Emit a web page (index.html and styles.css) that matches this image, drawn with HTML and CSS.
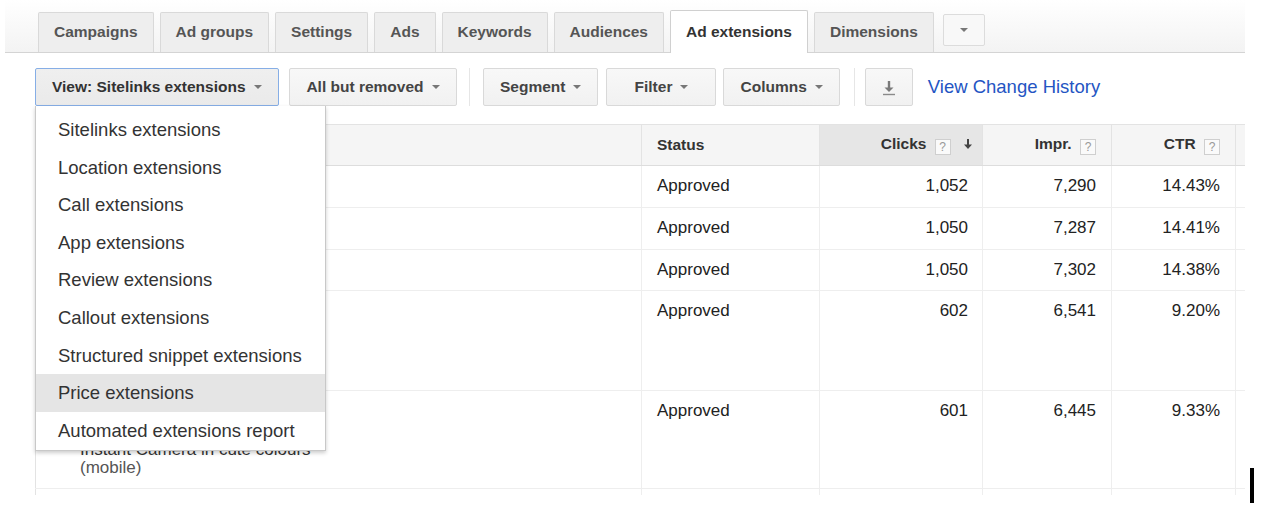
FILE: index.html
```html
<!DOCTYPE html>
<html lang="en">
<head>
    <meta charset="UTF-8">
    <title>Ad extensions</title>
    <link rel="stylesheet" href="styles.css">
</head>
<body>
<div class="page">

    <div class="tabbar">
        <a class="tab">Campaigns</a>
        <a class="tab">Ad groups</a>
        <a class="tab">Settings</a>
        <a class="tab">Ads</a>
        <a class="tab">Keywords</a>
        <a class="tab">Audiences</a>
        <a class="tab active">Ad extensions</a>
        <a class="tab">Dimensions</a>
        <span class="tab-more"><span class="caret"></span></span>
    </div>

    <div class="toolbar">
        <div class="view-menu">
            <button class="btn btn-open">View: Sitelinks extensions <span class="caret"></span></button>
            <ul class="menu">
                <li>Sitelinks extensions</li>
                <li>Location extensions</li>
                <li>Call extensions</li>
                <li>App extensions</li>
                <li>Review extensions</li>
                <li>Callout extensions</li>
                <li>Structured snippet extensions</li>
                <li class="hover">Price extensions</li>
                <li>Automated extensions report</li>
            </ul>
        </div>
        <button class="btn btn-status">All but removed <span class="caret"></span></button>
        <span class="sep"></span>
        <button class="btn">Segment <span class="caret"></span></button>
        <button class="btn btn-filter">Filter <span class="caret"></span></button>
        <button class="btn">Columns <span class="caret"></span></button>
        <span class="sep sep-2"></span>
        <button class="btn btn-icon" title="Download">
            <svg width="14" height="17" viewBox="0 0 14 17">
                <path d="M7 2v9" stroke="#7a7a7a" stroke-width="2.4"/>
                <path d="M2.5 8.5L7 13l4.5-4.5z" fill="#7a7a7a"/>
                <path d="M1 15.5h12" stroke="#8a8a8a" stroke-width="1.4"/>
            </svg>
        </button>
        <a class="history" href="#">View Change History</a>
    </div>

    <div class="grid-wrap">
        <table class="grid">
            <colgroup>
                <col style="width: 606px">
                <col style="width: 178px">
                <col style="width: 163px">
                <col style="width: 129px">
                <col style="width: 124px">
                <col style="width: 10px">
            </colgroup>
            <thead>
                <tr>
                    <th></th>
                    <th>Status</th>
                    <th class="num sorted">Clicks <span class="help">?</span>
                        <svg class="sort" width="10" height="11" viewBox="0 0 10 11">
                            <path d="M5 0v7" stroke="#444" stroke-width="2"/>
                            <path d="M1 5.5L5 10l4-4.5z" fill="#444"/>
                        </svg>
                    </th>
                    <th class="num">Impr. <span class="help">?</span></th>
                    <th class="num">CTR <span class="help">?</span></th>
                    <th></th>
                </tr>
            </thead>
            <tbody>
                <tr class="r-short">
                    <td></td>
                    <td>Approved</td>
                    <td class="num n-sorted">1,052</td>
                    <td class="num">7,290</td>
                    <td class="num">14.43%</td>
                    <td></td>
                </tr>
                <tr class="r-short">
                    <td></td>
                    <td>Approved</td>
                    <td class="num n-sorted">1,050</td>
                    <td class="num">7,287</td>
                    <td class="num">14.41%</td>
                    <td></td>
                </tr>
                <tr class="r-41">
                    <td></td>
                    <td>Approved</td>
                    <td class="num n-sorted">1,050</td>
                    <td class="num">7,302</td>
                    <td class="num">14.38%</td>
                    <td></td>
                </tr>
                <tr class="r-tall">
                    <td></td>
                    <td>Approved</td>
                    <td class="num n-sorted">602</td>
                    <td class="num">6,541</td>
                    <td class="num">9.20%</td>
                    <td></td>
                </tr>
                <tr class="r-tall2">
                    <td class="ext">Instant Camera in cute colours<br><span class="device">(mobile)</span></td>
                    <td>Approved</td>
                    <td class="num n-sorted">601</td>
                    <td class="num">6,445</td>
                    <td class="num">9.33%</td>
                    <td></td>
                </tr>
                <tr class="r-short">
                    <td></td>
                    <td></td>
                    <td></td>
                    <td></td>
                    <td></td>
                    <td></td>
                </tr>
            </tbody>
        </table>
    </div>

    <span class="cursor"></span>
</div>
</body>
</html>
```

FILE: styles.css
```css
/* Page frame */
body {
    margin: 0;
    font-family: "Liberation Sans", Arial, sans-serif;
    background-color: #fff;
    color: #222;
}

.page {
    position: relative;
    height: 516px;
    overflow: hidden;
}

/* Tabs */
.tabbar {
    display: flex;
    align-items: flex-end;
    gap: 6px;
    margin-left: 5px;
    width: 1240px;
    height: 53px;
    padding-left: 33px;
    box-sizing: border-box;
    border-bottom: 1px solid #d4d4d4;
    background: linear-gradient(#ffffff, #f3f3f3);
}

.tab {
    height: 40px;
    line-height: 38px;
    padding: 0 15px;
    box-sizing: border-box;
    background-color: #eeeeee;
    border: 1px solid #d9d9d9;
    border-bottom: none;
    border-radius: 2px 2px 0 0;
    font-size: 15.5px;
    font-weight: bold;
    color: #555;
}

.tab.active {
    height: 43px;
    line-height: 41px;
    margin-bottom: -1px;
    background-color: #fff;
    border-color: #d0d0d0;
    color: #333;
}

.tab-more {
    display: flex;
    align-items: center;
    justify-content: center;
    width: 42px;
    height: 32px;
    margin: 0 0 6px 3px;
    box-sizing: border-box;
    background-color: #f8f8f8;
    border: 1px solid #dcdcdc;
    border-radius: 2px;
}

.caret {
    display: inline-block;
    width: 0;
    height: 0;
    border-left: 4px solid transparent;
    border-right: 4px solid transparent;
    border-top: 4px solid #777;
}

/* Toolbar */
.toolbar {
    display: flex;
    align-items: center;
    height: 38px;
    margin: 15px 0 0 35px;
}

.btn {
    display: flex;
    align-items: center;
    gap: 8px;
    height: 38px;
    padding: 0 16px;
    box-sizing: border-box;
    border: 1px solid #d9d9d9;
    border-radius: 2px;
    background: linear-gradient(#f8f8f8, #f1f1f1);
    font-family: "Liberation Sans", Arial, sans-serif;
    font-size: 15.5px;
    font-weight: bold;
    color: #444;
    margin-right: 8px;
}

.btn-open {
    width: 244px;
    border-color: #86aee6;
    background: linear-gradient(#efefef, #eaeaea);
    color: #333;
}

.view-menu {
    position: relative;
    margin-right: 2px;
}

.btn-status {
    width: 168px;
    justify-content: center;
    margin-right: 0;
}

.btn-filter {
    width: 110px;
    justify-content: center;
    margin-right: 7px;
}

.btn-icon {
    width: 48px;
    justify-content: center;
    padding: 0;
    margin-right: 15px;
}

.sep {
    width: 1px;
    height: 38px;
    background-color: #e6e6e6;
    margin: 0 13px 0 12px;
}

.sep-2 {
    margin: 0 10px 0 6px;
}

.history {
    font-size: 18.5px;
    color: #2455c3;
    text-decoration: none;
}

/* Dropdown */
.menu {
    position: absolute;
    top: 38px;
    left: 0;
    z-index: 5;
    width: 291px;
    height: 345px;
    margin: 0;
    padding: 5px 0 0;
    box-sizing: border-box;
    list-style: none;
    background-color: #fff;
    border: 1px solid #c8c8c8;
    border-top: none;
    box-shadow: 0 2px 4px rgba(0, 0, 0, 0.2);
}

.menu li {
    height: 37.6px;
    line-height: 37.6px;
    padding-left: 22px;
    font-size: 18.5px;
    color: #333;
    white-space: nowrap;
}

.menu li.hover {
    background-color: #e5e5e5;
}

/* Table */
.grid-wrap {
    width: 1210px;
    height: 371px;
    margin: 18px 0 0 35px;
    overflow: hidden;
}

.grid {
    width: 1210px;
    table-layout: fixed;
    border-collapse: collapse;
}

.grid th {
    height: 40px;
    padding: 0 15px;
    background-color: #f5f5f5;
    border-top: 1px solid #e3e3e3;
    border-bottom: 1px solid #dddddd;
    border-right: 1px solid #e3e3e3;
    text-align: left;
    font-size: 15.5px;
    font-weight: bold;
    color: #333;
    white-space: nowrap;
}

.grid th:first-child,
.grid td:first-child {
    border-left: 1px solid #e3e3e3;
}

.grid th.sorted {
    background-color: #e6e6e6;
    padding-right: 9px;
}

.grid .num {
    text-align: right;
}

.help {
    display: inline-block;
    width: 14px;
    height: 14px;
    line-height: 14px;
    margin-left: 4px;
    border: 1px solid #cfcfcf;
    background-color: #fafafa;
    text-align: center;
    vertical-align: -2px;
    font-size: 12px;
    font-weight: normal;
    color: #999;
}

.sort {
    margin-left: 8px;
    vertical-align: -1px;
}

.grid td {
    padding: 10px 15px 0;
    vertical-align: top;
    border-bottom: 1px solid #eeeeee;
    border-right: 1px solid #eeeeee;
    font-size: 17px;
    color: #222;
    white-space: nowrap;
    overflow: hidden;
}

.grid td.n-sorted {
    padding-right: 14px;
}

.grid td.ext {
    padding: 50px 0 0 44px;
    line-height: 18px;
    color: #333;
}

.device {
    color: #555;
}

.r-short {
    height: 42px;
}

.r-41 {
    height: 41px;
}

.r-tall {
    height: 100px;
}

.r-tall2 {
    height: 98px;
}

/* stray caret at the right edge of the capture */
.cursor {
    position: absolute;
    left: 1250px;
    top: 468px;
    width: 4px;
    height: 35px;
    background-color: #000;
}
```
